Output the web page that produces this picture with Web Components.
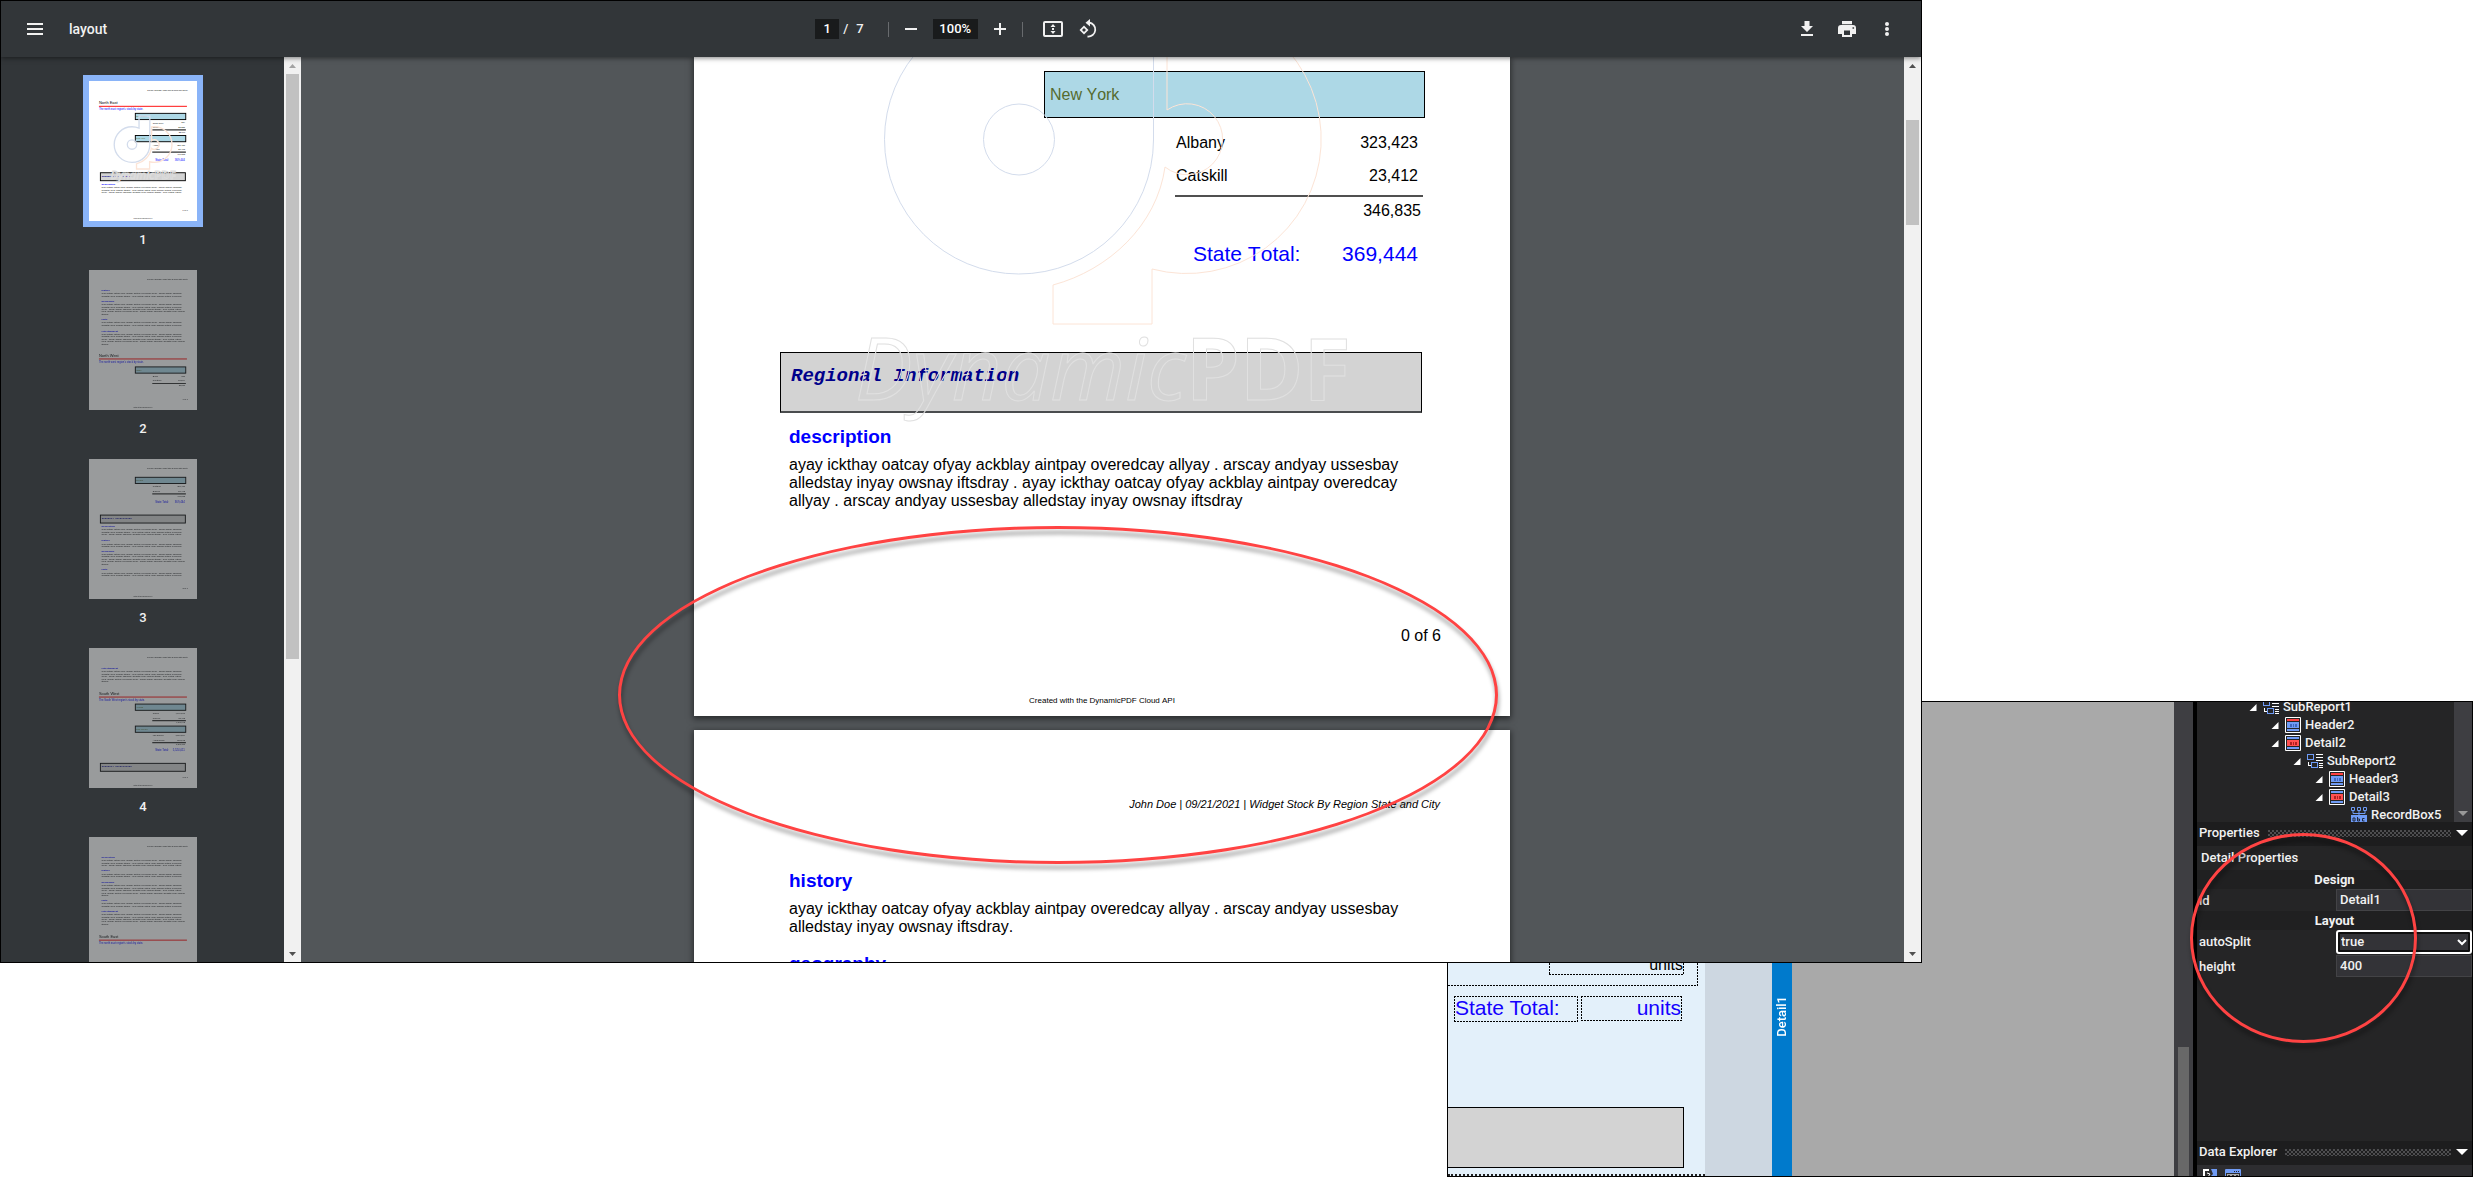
<!DOCTYPE html>
<html lang="en">
<head>
<meta charset="utf-8">
<title>layout</title>
<style>
  html, body { margin: 0; height: 100%; background: #fff; overflow: hidden; }
  body { font-family: Roboto, "Liberation Sans", sans-serif; }
</style>
</head>
<body>
<report-desktop></report-desktop>
<script>
const define = (name, html, setup) => {
  const template = document.createElement('template');
  template.innerHTML = html;
  customElements.define(name, class extends HTMLElement {
    constructor() {
      super();
      this.attachShadow({ mode: 'open' }).append(template.content.cloneNode(true));
    }
    connectedCallback() { if (setup) setup(this, this.shadowRoot); }
  });
};

/* ---------- shared drawings ---------- */
const LOGO = `
  <g fill="none" stroke-width="1">
    <path stroke="#d3dcec" d="M459.500 320V480A134.500 134.500 0 1 1 325 345Q352 345 378 356V265H459.500V400"/>
    <circle stroke="#d3dcec" cx="325" cy="479.500" r="35.500"/>
    <path stroke="#fce4d6" d="M473 346V450A35.500 35.500 0 1 1 471 507C463 565 415 610 359 625V664H458V609A134.500 134.500 0 1 0 473 346Z"/>
  </g>`;
const FILLER = [
  'ayay ickthay oatcay ofyay ackblay aintpay overedcay allyay . arscay andyay ussesbay',
  'alledstay inyay owsnay iftsdray . ayay ickthay oatcay ofyay ackblay aintpay overedcay',
  'allyay . arscay andyay ussesbay alledstay inyay owsnay iftsdray . ayay ickthay oatcay',
  'ofyay ackblay aintpay overedcay allyay . arscay andyay ussesbay alledstay inyay owsnay',
  'iftsdray.'];

/* Miniature pages, in the page's own 816 x 1056 units */
const t = (x, y, s, text, extra = '') => `<text x="${x}" y="${y}" font-size="${s}" ${extra}>${text}</text>`;
const R = 'text-anchor="end"';
const heading = (y, text) => t(95, y, 19, text, 'fill="#00f" font-weight="bold"');
const para = (y, n) => FILLER.slice(0, n).map((l, i) => t(95, y + i * 18, 16, l)).join('');
const region = (y, name, sub) => t(75, y, 30, name) +
  `<path d="M75 ${y + 18}H740" stroke="#f00" stroke-width="7"/>` + t(75, y + 46, 20, sub, 'fill="#00f"');
const state = (y, name, a, av, b, bv, total) =>
  `<rect x="350" y="${y}" width="381" height="47" fill="#add8e6" stroke="#000" stroke-width="7"/>` +
  t(356, y + 30, 16, name, 'fill="#556b2f"') + t(482, y + 77, 16, a) + t(724, y + 76, 16, av, R) +
  t(482, y + 110, 16, b) + t(724, y + 109, 16, bv, R) +
  `<path d="M478 ${y + 125}H732" stroke="#333" stroke-width="9"/>` + t(726, y + 146, 16, total, R);
const stateTotal = (y, v) => t(500, y, 21, 'State Total:', 'fill="#00f"') + t(724, y, 21, v, 'fill="#00f" ' + R);
const regional = y => `<rect x="86" y="${y}" width="642" height="60" fill="#d3d3d3" stroke="#000" stroke-width="7"/>` +
  t(97, y + 29, 19, 'Regional Information', 'fill="#00008b" font-weight="bold" font-style="italic" font-family="Liberation Mono, monospace"');
const SHEETS = {
  1: region(173, 'North East', 'The north east region\'s stock by state.') +
     state(244, 'New Jersey', 'Toms River', '324', 'Newark', '22,285', '22,609') +
     state(411, 'New York', 'Albany', '323,423', 'Catskill', '23,412', '346,835') +
     stateTotal(601, '369,444') + regional(692) + heading(783, 'description') + para(810, 3) +
     LOGO.replace('stroke-width="1"', 'stroke-width="10"') +
     '<text x="162" y="741" font-size="86" font-family="Open Sans, sans-serif" fill="none" stroke="#dcdcdc" stroke-width="7"><tspan font-style="italic">Dynamic</tspan><tspan font-weight="700">PDF</tspan></text>',
  2: heading(157, 'history') + para(184, 2) + heading(239, 'geography') + para(266, 5) +
     heading(377, 'facts') + para(402, 2) + heading(467, 'entertainment') + para(490, 5) +
     region(653, 'North West', 'The north west region\'s stock by state.') +
     state(731, 'Idaho', 'Boise', '323', 'Pocatello', '23,234', '23,557'),
  3: state(138, 'Oregon', 'Portland', '323,423', 'Eugene', '23,412', '346,835') + stateTotal(331, '369,444') +
     regional(423) + heading(512, 'description') + para(538, 3) + heading(620, 'history') + para(645, 2) +
     heading(701, 'geography') + para(725, 5) + heading(839, 'facts') + para(865, 2),
  4: heading(157, 'entertainment') + para(184, 5) +
     region(352, 'South West', 'The South West region\'s stock by state.') +
     state(423, 'Arizona', 'Tempe', '4,134,213', 'Phoenix', '32,432', '4,166,645') +
     state(589, 'New Mexico', 'Las Cruces', '1,234,234', 'Albuquerque', '123,132', '1,357,366') +
     stateTotal(775, '5,524,011') + regional(870),
  5: heading(158, 'description') + para(184, 3) + heading(257, 'history') + para(283, 2) +
     heading(347, 'geography') + para(373, 5) + heading(482, 'facts') + para(507, 2) +
     heading(563, 'entertainment') + para(590, 5) +
     region(760, 'South East', 'The north east region\'s stock by state.')
};

define('page-thumb', `
<style>
  :host { display: flex; flex-direction: column; align-items: center; height: 189px; flex: none; }
  button { display: block; padding: 0; border: 0; background: #fff; width: 108px; height: 140px; opacity: .5; font: inherit; }
  :host([selected]) button { opacity: 1; box-shadow: 0 0 0 6px #8ab4f8; }
  svg { display: block; width: 100%; height: 100%; font-family: "Liberation Sans", sans-serif; }
  span { font: 500 13px/18px Roboto, sans-serif; color: #f1f1f1; margin-top: 10px; }
</style>
<button type="button"><svg viewBox="0 0 816 1056" preserveAspectRatio="none"></svg></button><span></span>`,
(el, root) => {
  const n = el.getAttribute('page');
  root.querySelector('svg').innerHTML =
    t(746, 78, 11, 'John Doe | 09/21/2021 | Widget Stock By Region State and City', R + ' font-style="italic"') +
    SHEETS[n] + t(747, 981, 16, `${n - 1} of 6`, R) + t(408, 1044, 8, 'Created with the DynamicPDF Cloud API', 'text-anchor="middle"');
  root.querySelector('button').setAttribute('aria-label', 'Page ' + n);
  root.querySelector('span').textContent = n;
});

define('scroll-track', `
<style>
  :host { display: flex; flex-direction: column; align-items: center; width: 17px; background: #f1f1f1; flex: none; overflow: hidden; }
  svg { display: block; width: 17px; height: 17px; flex: none; }
  i { display: block; width: 13px; background: #c1c1c1; margin-top: var(--before, 0px); height: var(--length, 100px); }
  u { flex: 1; }
</style>
<svg viewBox="0 0 17 17"><path d="M5 11h7l-3.500-4z" fill="var(--up, #505050)"/></svg><i></i><u></u>
<svg viewBox="0 0 17 17"><path d="M5 7h7l-3.500 4z" fill="#505050"/></svg>`);

define('red-ring', `
<style>
  :host { position: absolute; display: block; pointer-events: none; box-sizing: border-box;
    border: 3px solid #ff4343; border-radius: 50%; filter: drop-shadow(1px 5px 2px rgba(0,0,0,.4)); }
</style>`);

define('viewer-toolbar', `
<style>
  :host { display: grid; grid-template-columns: 1fr auto 1fr; align-items: center; height: 56px; flex: none;
    background: #323639; color: #f1f1f1; font: 500 13px/20px Roboto, sans-serif; position: relative; z-index: 2;
    box-shadow: 0 1px 5px rgba(0,0,0,.5); }
  div { display: flex; align-items: center; }
  button { width: 24px; height: 24px; padding: 0; border: 0; background: none; color: inherit; }
  svg { display: block; width: 24px; height: 24px; fill: currentColor; }
  input { box-sizing: border-box; height: 20px; border: 0; padding: 0; background: #191b1c; color: #fff; font: inherit; text-align: center; }
  .left { padding-left: 22px; gap: 22px; font-size: 14px; }
  .right { justify-content: flex-end; gap: 16px; padding-right: 22px; }
  .page { gap: 4px; } .page input { width: 24px; } .page b { font-weight: inherit; padding-left: 4px; }
  .sep { width: 1px; height: 15px; background: #686b6e; }
  .zoom { gap: 10px; padding: 0 10px; } .zoom input { width: 45px; }
  .mid { padding-right: 6px; } .page { padding-right: 24px; }
  .view { gap: 12px; padding-left: 18px; }
</style>
<div class="left"><button aria-label="Menu"><svg viewBox="0 0 24 24"><path d="M4 6h16v2H4zM4 11h16v2H4zM4 16h16v2H4z"/></svg></button><span>layout</span></div>
<div class="mid">
  <div class="page"><input aria-label="Page number" value="1"><span>/</span><b>7</b></div><span class="sep"></span>
  <div class="zoom">
    <button aria-label="Zoom out"><svg viewBox="0 0 24 24"><path d="M6 11h12v2H6z"/></svg></button>
    <input aria-label="Zoom level" value="100%">
    <button aria-label="Zoom in"><svg viewBox="0 0 24 24"><path d="M6 11h5V6h2v5h5v2h-5v5h-2v-5H6z"/></svg></button>
  </div><span class="sep"></span>
  <div class="view">
    <button aria-label="Fit to page"><svg viewBox="0 0 24 24"><rect x="3" y="5" width="18" height="14" rx="1" fill="none" stroke="currentColor" stroke-width="2"/><path d="M12 7l2.500 3h-5zM12 17l2.500-3h-5zM11 11h2v2h-2z"/></svg></button>
    <button aria-label="Rotate"><svg viewBox="0 0 24 24"><path d="M7 8.500L2.500 13L7 17.500L11.500 13ZM5 13L7 11L9 13L7 15Z" fill-rule="evenodd"/><path d="M12 5.500A7 7 0 1 1 10.500 19.500" fill="none" stroke="currentColor" stroke-width="1.800"/><path d="M13 2v7.500L8.500 5.700z"/></svg></button>
  </div>
</div>
<div class="right">
  <button aria-label="Download"><svg viewBox="0 0 24 24"><path d="M9.500 4h5v5H18l-6 6-6-6h3.500zM6 17h12v2H6z"/></svg></button>
  <button aria-label="Print"><svg viewBox="0 0 24 24"><path d="M7 4h10v3.200H7zM6 8h12a3 3 0 0 1 3 3v6h-4v3H7v-3H3v-6a3 3 0 0 1 3-3zM9 13.500V18h6v-4.500zM17.500 10.200v1.600h1.600v-1.600z" fill-rule="evenodd"/></svg></button>
  <button aria-label="More"><svg viewBox="0 0 24 24"><circle cx="12" cy="7" r="2"/><circle cx="12" cy="12" r="2"/><circle cx="12" cy="17" r="2"/></svg></button>
</div>`);

define('report-sheet', `
<style>
  :host { display: block; position: relative; width: 816px; box-sizing: border-box; background: #fff; flex: none;
    box-shadow: 0 2px 6px 1px rgba(0,0,0,.5); font: 16px/18px "Liberation Sans", Arial, sans-serif; font-kerning: none; color: #000; }
</style><slot></slot>`);

define('pdf-pages', `
<style>
  :host { display: flex; flex-direction: column; align-items: center; flex: 1; min-width: 0; overflow: hidden; background: #525659; padding-right: 1px; }
  .stack { display: flex; flex-direction: column; gap: 14px; position: relative; flex: none; font-kerning: none; }
  .first { padding: 14px 0 10px; }
  .second { padding: 68px 0 80px; }
  .state { margin-left: 350px; width: 381px; height: 47px; box-sizing: border-box; border: 1px solid #000; background: #add8e6;
    color: #556b2f; line-height: 45px; padding-left: 5px; }
  table { border-collapse: collapse; margin: 8px 0 0 481px; width: 248px; }
  td { padding: 0 5px 0 1px; line-height: 33px; }
  td:last-child { text-align: right; }
  tbody tr:last-child td { padding-bottom: 3px; }
  tfoot td { line-height: 27px; border-top: 2px solid #505050; padding-right: 2px; }
  .total { display: flex; justify-content: space-between; margin: 16px 0 0 499px; width: 225px; color: #00f; font-size: 21px; line-height: 27px; }
  .info { margin: 85px 0 0 86px; width: 642px; height: 61px; box-sizing: border-box; border: 1px solid #000; border-bottom: 2px solid #4a4c4e; background: #d3d3d3;
    color: #00008b; font: italic bold 19px/22px "Liberation Mono", monospace; padding: 12px 10px; }
  h3 { margin: 0 0 8px 95px; font-size: 19px; line-height: 22px; color: #00f; }
  p { margin: 0 0 17px 95px; width: 640px; }
  .info + h3 { margin-top: 13px; }
  .number { margin: 117px 69px 0 0; text-align: right; }
  .made { margin-top: 51px; text-align: center; font-size: 8px; line-height: 10px; }
  .head { margin: 0 70px 60px 0; text-align: right; font-size: 11px; line-height: 12px; font-style: italic; }
  .mark { position: absolute; inset: 0; width: 816px; height: 100%; overflow: hidden; }
  .mark svg { position: absolute; left: 0; bottom: 0; width: 816px; height: 1056px; }
  .name { position: absolute; left: 161px; top: 260px; font: 86px/100px "Open Sans", sans-serif; color: transparent;
    -webkit-text-stroke: 1px #e0e0e0; white-space: nowrap; display: flex; }
  .name i { font-weight: 400; } .name b { font-weight: 700; }
  red-ring { left: -76px; top: 469px; width: 880px; height: 338px; }
</style>
<div class="stack">
  <report-sheet class="first">
    <div class="state">New York</div>
    <table>
      <tbody><tr><td>Albany</td><td>323,423</td></tr><tr><td>Catskill</td><td>23,412</td></tr></tbody>
      <tfoot><tr><td></td><td>346,835</td></tr></tfoot>
    </table>
    <div class="total"><span>State Total:</span><span>369,444</span></div>
    <div class="info">Regional Information</div>
    <h3>description</h3>
    <p>ayay ickthay oatcay ofyay ackblay aintpay overedcay allyay . arscay andyay ussesbay alledstay inyay owsnay iftsdray . ayay ickthay oatcay ofyay ackblay aintpay overedcay allyay . arscay andyay ussesbay alledstay inyay owsnay iftsdray</p>
    <div class="number">0 of 6</div>
    <div class="made">Created with the DynamicPDF Cloud API</div>
    <div class="mark"><svg viewBox="0 0 816 1056">${LOGO}</svg><div class="name"><i>Dynamic</i><b>PDF</b></div></div>
  </report-sheet>
  <report-sheet class="second">
    <div class="head">John Doe | 09/21/2021 | Widget Stock By Region State and City</div>
    <h3>history</h3>
    <p>ayay ickthay oatcay ofyay ackblay aintpay overedcay allyay . arscay andyay ussesbay alledstay inyay owsnay iftsdray.</p>
    <h3>geography</h3>
  </report-sheet>
  <red-ring></red-ring>
</div>`);

define('pdf-viewer', `
<style>
  :host { display: flex; flex-direction: column; box-sizing: border-box; border: 1px solid #000; overflow: hidden; background: #525659; }
  main { display: flex; flex: 1; min-height: 0; }
  nav { display: flex; width: 283px; background: #323639; overflow: hidden; flex: none; box-sizing: border-box; padding: 24px 0 0 88px; flex-direction: column; align-items: flex-start; }
  .side { --up: #a3a3a3; --length: 585px; }
  .body { --before: 46px; --length: 105px; }
</style>
<viewer-toolbar></viewer-toolbar>
<main>
  <nav aria-label="Pages">
    <page-thumb page="1" selected></page-thumb><page-thumb page="2"></page-thumb><page-thumb page="3"></page-thumb>
    <page-thumb page="4"></page-thumb><page-thumb page="5"></page-thumb>
  </nav>
  <scroll-track class="side"></scroll-track>
  <pdf-pages></pdf-pages>
  <scroll-track class="body"></scroll-track>
</main>`);

/* ---------- layout designer ---------- */
define('design-canvas', `
<style>
  :host { display: flex; flex: 1; min-width: 0; overflow: hidden; background: #a9a9a9; font: 16px/18px "Liberation Sans", Arial, sans-serif;
    --h: repeating-linear-gradient(90deg, #000 0 2px, transparent 2px 3px);
    --v: repeating-linear-gradient(#000 0 2px, transparent 2px 3px); }
  .paper { width: 257px; background: #e3f0fa; flex: none; display: flex; flex-direction: column; align-items: flex-start; }
  .gutter { width: 67px; background: #cdd7e1; flex: none; }
  .strip { width: 20px; background: #007acc; color: #fff; flex: none; padding-top: 294px; font: 500 13px/20px Roboto, sans-serif; }
  .strip span { display: block; writing-mode: vertical-rl; transform: rotate(180deg); }
  .group { box-sizing: border-box; width: 250px; height: 284px; display: flex; align-items: flex-end; justify-content: flex-end; padding: 0 14px 11px 0;
    background: var(--h) bottom/100% 1px no-repeat, var(--v) right/1px 100% no-repeat; }
  .field, .row div { box-sizing: border-box; padding: 1px;
    background: var(--h) top/100% 1px no-repeat, var(--h) bottom/100% 1px no-repeat, var(--v) left/1px 100% no-repeat, var(--v) right/1px 100% no-repeat; }
  .field { text-align: right; width: 135px; height: 30px; padding-top: 11px; }
  .row { display: flex; gap: 3px; align-items: flex-start; margin: 10px 0 0 6px; color: #1400ff; font-size: 21px; line-height: 22px; }
  .row div { height: 26px; width: 124px; }
  .row div + div { text-align: right; width: 101px; height: 25px; }
  .box { box-sizing: border-box; border: 1px solid #000; border-left: 0; width: 236px; height: 61px; margin-top: 85px; background: #d3d3d3; }
  .end { width: 257px; border-top: 2px dotted #222; margin-top: 6px; }
</style>
<div class="paper">
  <div class="group"><div class="field">units</div></div>
  <div class="row"><div>State Total:</div><div>units</div></div>
  <div class="box"></div><div class="end"></div>
</div>
<div class="gutter"></div>
<div class="strip"><span>Detail1</span></div>`);

const TREE_ICONS = {
  sub: '<g fill="none" stroke="#6f9bf5"><rect x=".5" y="1.500" width="6" height="5"/><rect x="4.500" y="9.500" width="6" height="5"/></g><path d="M9 1h7v1H9zM9 4h7v1H9zM9 7h7v1H9zM12 10h4v1h-4zM12 12h4v1h-4zM12 14h4v1h-4zM1 9h1v3h2v1H1z" fill="#fff"/>',
  header: '<path d="M.500.500h15v15H.500z" fill="#252526" stroke="#fff"/><path d="M2 2h12v2H2z" fill="#ff4040"/><path d="M2 5h12v6H2zM2 12h12v2H2z" fill="#6f9bf5"/><path d="M5 7h2v3H5zM8 7h1v3H8zM10 7h2v3h-2z" fill="#3f67c0"/>',
  detail: '<path d="M.500.500h15v15H.500z" fill="#252526" stroke="#fff"/><path d="M2 2h12v2H2zM2 12h12v2H2z" fill="#6f9bf5"/><path d="M2 5h12v6H2z" fill="#ff5050"/><path d="M5 7h2v3H5zM8 7h1v3H8zM10 7h2v3h-2z" fill="#b02020"/>',
  record: '<path d="M0 8h16v8H0z" fill="#6f9bf5"/><g fill="none" stroke="#6f9bf5"><path d="M.500.500h3v3h-3zM6.500.500h3v3h-3zM12.500.500h3v3h-3zM2 4v2.500h12V4M8 4v4"/></g><path d="M2 11h2v3H2zM6.500 10v4h2v-2h-2M13.500 11.500h-2v2.500h2" fill="none" stroke="#20283c"/>'
};
define('tree-item', `
<style>
  :host { display: flex; align-items: center; height: 18px; flex: none; color: #f1f1f1; font: 500 13px/18px Roboto, sans-serif; padding-left: calc(52px + var(--depth, 0) * 22px); }
  svg { display: block; flex: none; }
  .arrow { width: 8px; height: 8px; margin-right: 6px; }
  .icon { width: 16px; height: 16px; margin-right: 4px; }
</style>
<svg class="arrow" viewBox="0 0 8 8"><path d="M7.500 1v7H.500z" fill="#fff"/></svg><svg class="icon" viewBox="0 0 16 16"></svg><slot></slot>`,
(el, root) => {
  el.style.setProperty('--depth', el.getAttribute('depth'));
  const kind = el.getAttribute('kind');
  root.querySelector('.icon').innerHTML = TREE_ICONS[kind];
  if (kind === 'record') root.querySelector('.arrow').style.visibility = 'hidden';
});

define('panel-header', `
<style>
  :host { display: flex; align-items: center; gap: 8px; height: 24px; box-sizing: border-box; padding: 0 4px 2px 2px; background: #1d1d1e; color: #f1f1f1; flex: none; font: 500 13px/22px Roboto, sans-serif; }
  i { flex: 1; height: 7px; margin-right: -3px;
    background: radial-gradient(circle at 1px 1px, #4e4e50 1px, transparent 1px) 0 0/4px 4px, radial-gradient(circle at 1px 1px, #4e4e50 1px, transparent 1px) 2px 2px/4px 4px; }
  svg { width: 12px; height: 6px; display: block; }
</style>
<slot></slot><i></i><svg viewBox="0 0 12 6"><path d="M0 0h12L6 6z" fill="#fff"/></svg>`);

define('property-grid', `
<style>
  :host { display: block; color: #f1f1f1; font: 500 13px/19px Roboto, sans-serif; }
  .title { height: 24px; line-height: 24px; padding-left: 4px; }
  .section { background: #202021; text-align: center; font-weight: 700; height: 19px; line-height: 20px; }
  .row { display: grid; grid-template-columns: 139px 1fr; align-items: center; height: 22px; }
  .row.wide { height: 25px; align-items: start; }
  .row.wide label { line-height: 24px; }
  label { padding-left: 2px; }
  input, select { box-sizing: border-box; width: 100%; height: 22px; margin: 0; border: 1px solid #434346; background: #333337; color: #f1f1f1; font: inherit; padding: 0 3px 2px; outline: 0; }
  .pick { display: grid; align-items: center; }
  .pick > * { grid-area: 1 / 1; }
  select { appearance: none; height: 24px; border: 2px solid #fff; border-radius: 3px; box-shadow: inset 0 0 0 2px #101010; padding: 0 3px 2px; }
  svg { width: 10px; height: 7px; justify-self: end; margin-right: 5px; pointer-events: none; }
</style>
<div class="title">Detail Properties</div>
<div class="section">Design</div>
<div class="row"><label for="id">id</label><input id="id" value="Detail1"></div>
<div class="section">Layout</div>
<div class="row wide"><label for="split">autoSplit</label><div class="pick"><select id="split"><option>true</option><option>false</option></select><svg viewBox="0 0 10 7"><path d="M1 1l4 4 4-4" fill="none" stroke="#fff" stroke-width="2"/></svg></div></div>
<div class="row"><label for="height">height</label><input id="height" value="400"></div>`);

define('layout-designer', `
<style>
  :host { display: flex; box-sizing: border-box; border: 1px solid #000; overflow: hidden; background: #252526; }
  .track { width: 19px; background: #3e3e42; flex: none; display: flex; flex-direction: column; justify-content: flex-end; align-items: center; }
  .track i { width: 11px; height: 129px; background: #686868; }
  .divider { width: 4px; background: #000; flex: none; }
  aside { width: 275px; background: #252526; display: flex; flex-direction: column; flex: none; position: relative; }
  .tree { display: flex; align-items: stretch; height: 120px; overflow: hidden; flex: none; }
  .items { flex: 1; display: flex; flex-direction: column; justify-content: flex-end; margin-bottom: -2px; min-width: 0; }
  .bar { width: 18px; background: #3e3e42; display: flex; align-items: flex-end; justify-content: center; padding-bottom: 6px; }
  .bar svg { width: 10px; height: 5px; display: block; }
  property-grid { flex: 1; min-height: 0; }
  .tools { height: 11px; overflow: hidden; background: #2d2d30; padding: 4px 0 0 6px; display: flex; gap: 8px; box-sizing: border-box; flex: none; }
  .tools button { padding: 0; border: 0; background: none; width: 14px; height: 16px; flex: none; }
  .tools button + button { width: 16px; }
  .tools svg { display: block; width: 100%; height: 16px; }
  red-ring { right: 55px; top: 131px; width: 227px; height: 210px; z-index: 2; }
</style>
<design-canvas></design-canvas>
<div class="track"><i></i></div><div class="divider"></div>
<aside>
  <div class="tree">
    <div class="items">
      <tree-item depth="0" kind="sub">SubReport1</tree-item>
      <tree-item depth="1" kind="header">Header2</tree-item>
      <tree-item depth="1" kind="detail">Detail2</tree-item>
      <tree-item depth="2" kind="sub">SubReport2</tree-item>
      <tree-item depth="3" kind="header">Header3</tree-item>
      <tree-item depth="3" kind="detail">Detail3</tree-item>
      <tree-item depth="4" kind="record">RecordBox5</tree-item>
    </div>
    <div class="bar"><svg viewBox="0 0 10 5"><path d="M0 0h10L5 5z" fill="#999"/></svg></div>
  </div>
  <panel-header>Properties</panel-header>
  <property-grid></property-grid>
  <panel-header>Data Explorer</panel-header>
  <div class="tools">
    <button aria-label="Add"><svg viewBox="0 0 14 16"><path d="M6 1H1v14h12" fill="none" stroke="#fff" stroke-width="2"/><path d="M8 0h6v9l-2-2-5 5-2-2 5-5z" fill="#6f9bf5"/><path d="M4 4l3 1-2 3" fill="none" stroke="#fff"/></svg></button>
    <button aria-label="Fields"><svg viewBox="0 0 16 16"><path d="M.500.500h15v15H.500z" fill="none" stroke="#6f9bf5"/><path d="M1 1h14v3H1z" fill="#6f9bf5"/><path d="M9 2h1v1H9zM11 2h1v1h-1zM13 2h1v1h-1z" fill="#222"/><path d="M2 5h12v4H2z" fill="#aaa"/><path d="M3 6h2v2H3zM7 6h2v2H7zM11 6h2v2h-2z" fill="#333"/></svg></button>
  </div>
  <red-ring></red-ring>
</aside>`);

/* Two overlapping windows and the pointer */
define('report-desktop', `
<style>
  :host { display: block; position: relative; height: 100vh; background: #fff; overflow: hidden; }
  layout-designer { position: absolute; inset: 701px 0 0 1447px; }
  pdf-viewer { position: absolute; inset: 0 551px 214px 0; }
  svg { position: absolute; left: 295px; top: 37px; width: 12px; height: 18px; }
</style>
<layout-designer></layout-designer>
<pdf-viewer></pdf-viewer>
<svg viewBox="0 0 12 18"><path d="M.500 1v14l3.300-3 2.200 5 2.200-1-2.200-4.800h4.800z" fill="#fff" stroke="#000"/></svg>`);
</script>
</body>
</html>
